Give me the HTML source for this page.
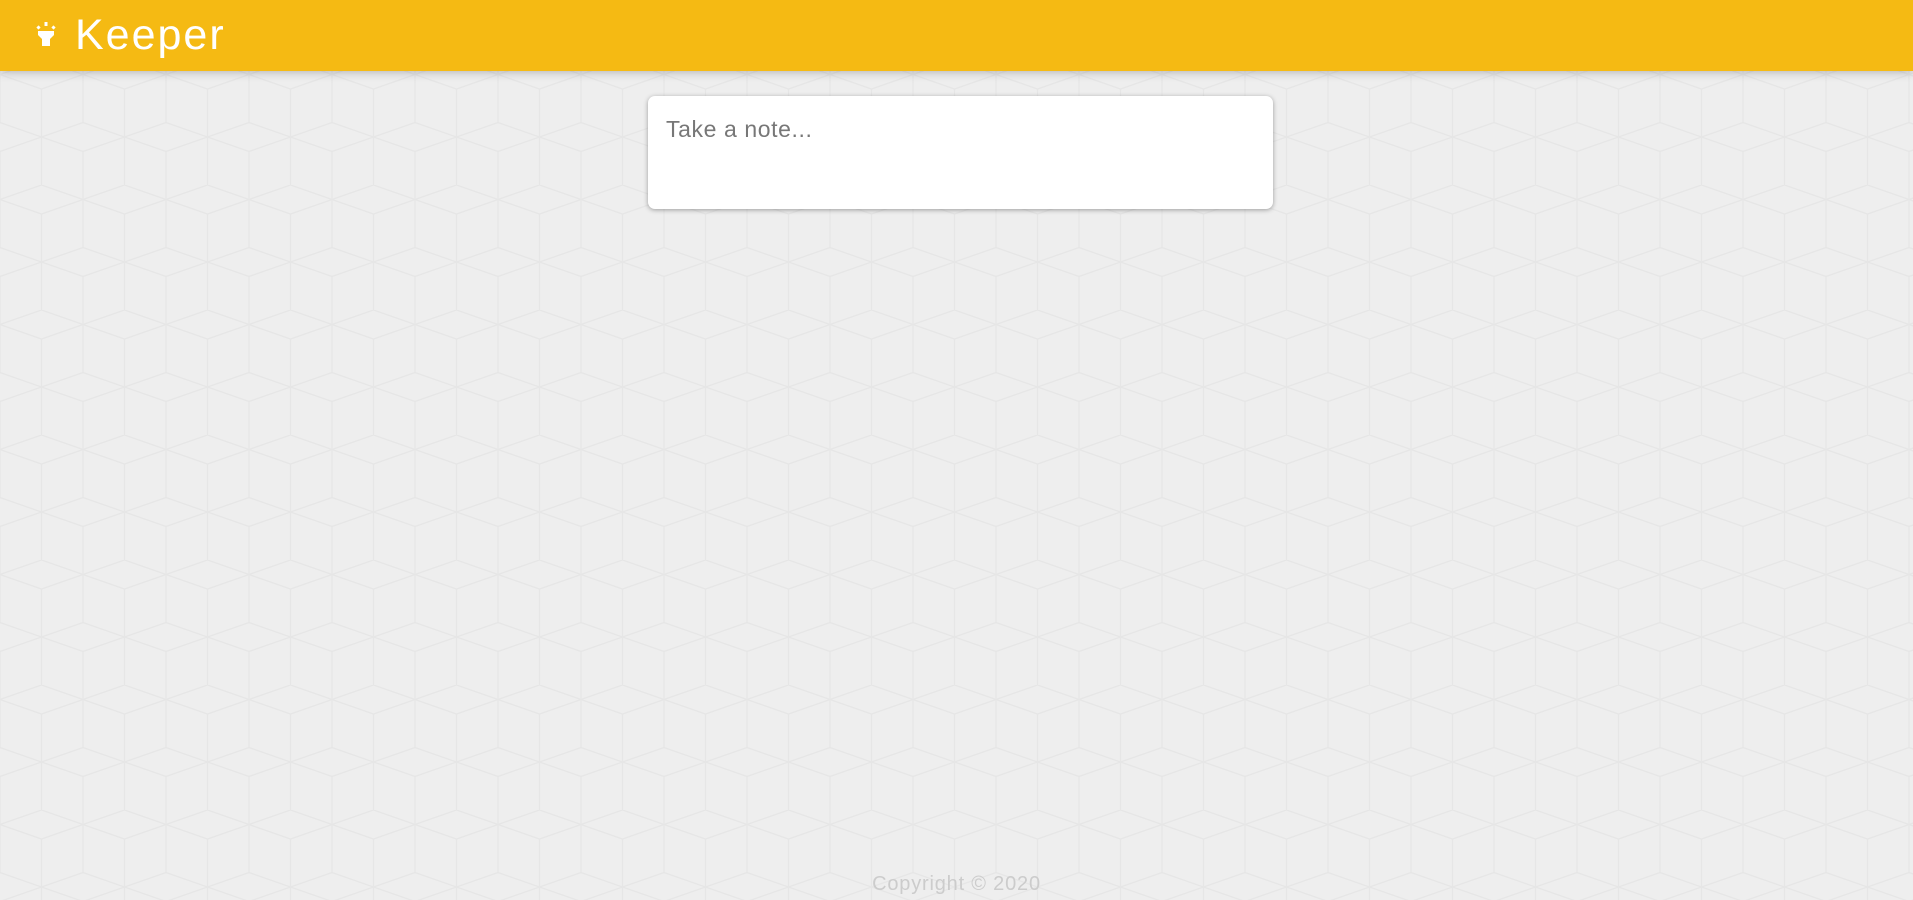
<!DOCTYPE html>
<html><head><meta charset="utf-8"><style>
html,body{margin:0;padding:0;width:1913px;height:900px;overflow:hidden;font-family:"Liberation Sans",sans-serif;}
body{background:#eeeeee;position:relative;}
#bg{position:absolute;left:0;top:0;width:1913px;height:900px;}
header{position:absolute;left:0;top:0;width:1913px;height:71px;background:#f5ba13;box-shadow:0 0 10px 0 rgba(0,0,0,0.3);z-index:2;}
header h1{position:absolute;left:75px;top:11px;margin:0;color:#fff;font-weight:normal;font-size:43px;line-height:48px;letter-spacing:2px;}
header svg{position:absolute;left:34px;top:20px;}
.card{position:absolute;left:648px;top:96px;width:625px;height:113px;background:#fff;border-radius:7px;box-shadow:0 1px 5px rgb(0 0 0 / 35%);z-index:1;}
.card span{position:absolute;left:18px;top:20px;font-size:23px;letter-spacing:0.6px;color:#777;}
footer{position:absolute;left:0;width:1913px;top:873px;text-align:center;color:#ccc;font-size:20px;letter-spacing:0.8px;z-index:1;}
</style></head><body>
<svg id="bg" xmlns="http://www.w3.org/2000/svg"><defs>
<pattern id="p" width="83" height="125" patternUnits="userSpaceOnUse" y="60">
<g fill="none" stroke="#e6e6e6" stroke-width="1.3">
<path d="M41.5 0L83 14.5L41.5 29L0 14.5Z"/>
<path d="M41.5 29V77M0 0V62.5M83 0V62.5"/>
<path d="M0 62.5L41.5 77L0 91.5M83 62.5L41.5 77L83 91.5"/>
<path d="M0 91.5V125M83 91.5V125M41.5 77V125"/>
</g></pattern></defs><rect width="1913" height="900" fill="url(#p)"/></svg>
<header>
<svg width="24" height="28" viewBox="0 0 24 28"><g fill="#fff">
<rect x="3" y="6" width="3" height="3" transform="rotate(-40 4.5 7.5)"/>
<rect x="10.5" y="2" width="3" height="4"/>
<rect x="18" y="6" width="3" height="3" transform="rotate(40 19.5 7.5)"/>
<path d="M4 11H20V15L16 19V26H8V19L4 15Z"/></g></svg>
<h1>Keeper</h1></header>
<div class="card"><span>Take a note...</span></div>
<footer>Copyright © 2020</footer>
</body></html>
